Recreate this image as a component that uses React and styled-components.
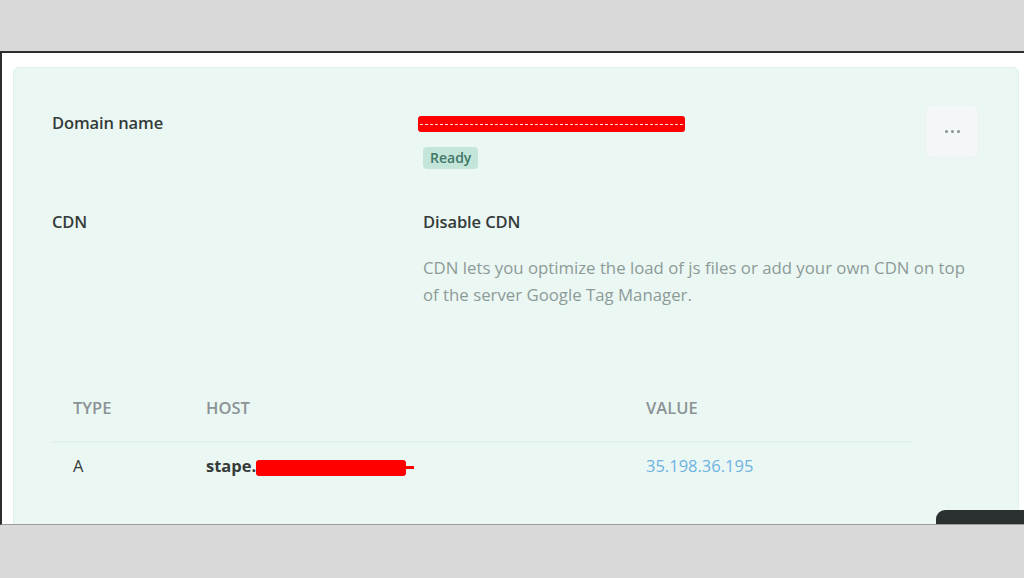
import React from 'react'
import styled, { createGlobalStyle } from 'styled-components'

const GlobalStyle = createGlobalStyle`
  html, body {
    margin: 0;
    padding: 0;
    background: #d9d9d9;
  }
  body {
    font-family: 'Open Sans', 'Noto Sans', 'Liberation Sans', sans-serif;
  }
`

const COLORS = {
  TEXT: '#343b3a',
  MUTED: '#8d9b98',
  HEAD: '#8b9396',
  CARD: '#ebf7f3',
  LINK: '#6db3e2',
  REDACT: '#ff0000',
}

const Page = styled.div`
  height: 578px;
  display: flex;
  flex-direction: column;
  padding-top: 51px;
  box-sizing: border-box;
`

const Frame = styled.div`
  position: relative;
  height: 474px;
  box-sizing: border-box;
  background: #ffffff;
  border-top: 2px solid #2d2d2d;
  border-left: 2px solid #2d2d2d;
  border-bottom: 1px solid #9c9c9c;
  overflow: hidden;
  padding: 14px 5px 0 11px;
`

const Card = styled.div`
  background: ${COLORS.CARD};
  border: 1px solid #e2efea;
  border-radius: 6px;
  height: 520px;
  box-sizing: border-box;
  padding: 37px 39px 0 38px;
`

const InfoGrid = styled.div`
  display: grid;
  grid-template-columns: 371px 1fr 54px;
  row-gap: 43px;
  align-items: start;
`

const Label = styled.div`
  margin-top: ${(p) => p.$offset || 0}px;
  font-size: 16.5px;
  line-height: 20px;
  font-weight: 600;
  color: ${COLORS.TEXT};
  letter-spacing: -0.1px;
`

const ValueCol = styled.div`
  grid-column: ${(p) => (p.$wide ? '2 / span 2' : 'auto')};
  display: flex;
  flex-direction: column;
  align-items: flex-start;
`

const Redacted = styled.span`
  position: relative;
  display: inline-block;
  width: ${(p) => p.$w}px;
  height: ${(p) => p.$h}px;
  background: ${COLORS.REDACT};
  border-radius: 3px;
  vertical-align: middle;

  &::after {
    content: '';
    display: ${(p) => (p.$dashed ? 'block' : 'none')};
    position: absolute;
    left: 2px;
    right: 2px;
    top: 50%;
    border-top: 1px dashed rgba(255, 255, 255, 0.85);
  }
`

const DomainBar = styled(Redacted)`
  margin-top: 11px;
  margin-left: -5px;
`

const Badge = styled.span`
  margin-top: 15px;
  padding: 0 7px;
  height: 22px;
  line-height: 22px;
  border-radius: 4px;
  background: #c4e6da;
  color: #3f7866;
  font-size: 14px;
  font-weight: 600;
`

const MenuButton = styled.button`
  width: 54px;
  height: 53px;
  border: 1px solid #edf2f2;
  border-radius: 6px;
  background: #f3f7f8;
  display: flex;
  align-items: center;
  justify-content: center;
  gap: 3px;
  padding: 0;
  cursor: pointer;
`

const Dot = styled.span`
  width: 3px;
  height: 3px;
  border-radius: 50%;
  background: #8b9193;
`

const Description = styled.p`
  margin: 22px 0 0;
  font-size: 16.8px;
  line-height: 27px;
  color: ${COLORS.MUTED};
  max-width: 580px;
`

const Table = styled.div`
  margin-top: 80px;
  width: 860px;
`

const TableRow = styled.div`
  display: grid;
  grid-template-columns: 133px 440px 1fr;
  border-bottom: ${(p) => (p.$head ? '2px solid #e2f1ec' : 'none')};
`

const Cell = styled.div`
  padding: ${(p) => (p.$head ? '10px 0 23px 21px' : '13px 0 0 21px')};
  font-size: 16.5px;
  line-height: 20px;
  color: ${(p) => p.$color || COLORS.TEXT};
  font-weight: ${(p) => (p.$bold ? 700 : 400)};
  white-space: nowrap;
`

const HeadCell = styled(Cell)`
  color: ${COLORS.HEAD};
  font-weight: 600;
  text-transform: uppercase;
`

const HostTail = styled.span`
  display: inline-block;
  width: 10px;
  height: 3px;
  background: ${COLORS.REDACT};
  vertical-align: middle;
  margin-left: -2px;
`

const ChatWidget = styled.div`
  position: absolute;
  right: 0;
  bottom: -10px;
  width: 88px;
  height: 24px;
  background: #2b3031;
  border-top-left-radius: 9px;
`

const App = () => {
  return (
    <Page>
      <GlobalStyle />
      <Frame>
        <Card>
          <InfoGrid>
            <Label $offset={8}>Domain name</Label>
            <ValueCol>
              <DomainBar $w={267} $h={16} $dashed />
              <Badge>Ready</Badge>
            </ValueCol>
            <MenuButton aria-label="More">
              <Dot />
              <Dot />
              <Dot />
            </MenuButton>

            <Label>CDN</Label>
            <ValueCol $wide>
              <Label>Disable CDN</Label>
              <Description>
                CDN lets you optimize the load of js files or add your own CDN
                on top of the server Google Tag Manager.
              </Description>
            </ValueCol>
          </InfoGrid>

          <Table>
            <TableRow $head>
              <HeadCell $head>Type</HeadCell>
              <HeadCell $head>Host</HeadCell>
              <HeadCell $head>Value</HeadCell>
            </TableRow>
            <TableRow>
              <Cell>A</Cell>
              <Cell $bold>
                stape.
                <Redacted $w={150} $h={16} />
                <HostTail />
              </Cell>
              <Cell $color={COLORS.LINK}>35.198.36.195</Cell>
            </TableRow>
          </Table>
        </Card>
        <ChatWidget />
      </Frame>
    </Page>
  )
}

export default App
